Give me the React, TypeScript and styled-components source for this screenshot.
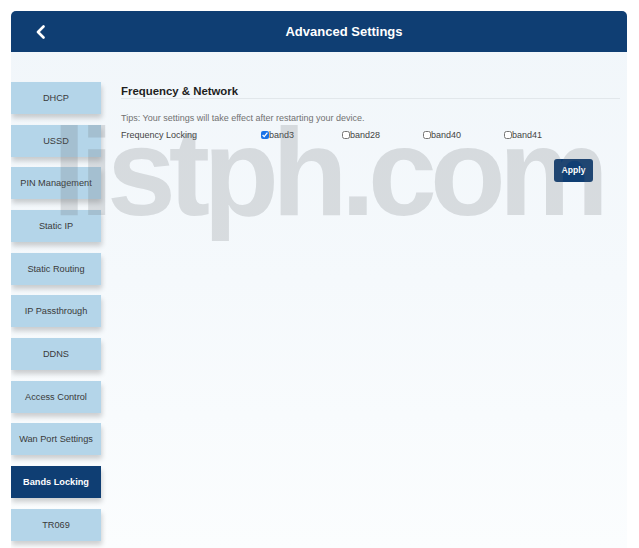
import React from "react";
import styled, { createGlobalStyle } from "styled-components";

const GlobalStyle = createGlobalStyle`
  html, body { margin: 0; padding: 0; background: #ffffff; }
  body { font-family: "Liberation Sans", Arial, Helvetica, sans-serif; }
  * { box-sizing: border-box; }
`;

const Page = styled.div`
  position: relative;
  width: 639px;
  height: 548px;
  overflow: hidden;
  padding: 11px 12px 0 11px;
  background: #ffffff;
`;

const Panel = styled.div`
  height: 100%;
  border-radius: 5px 5px 0 0;
  overflow: hidden;
  display: flex;
  flex-direction: column;
  background: linear-gradient(180deg, #f1f6fa 0%, #f5f9fc 50%, #fbfdfe 100%);
`;

const Header = styled.header`
  height: 41px;
  flex-shrink: 0;
  display: flex;
  align-items: center;
  background: #0f3e73;
  color: #ffffff;
`;

const BackButton = styled.button`
  width: 50px;
  height: 100%;
  border: 0;
  background: transparent;
  padding: 0 0 0 24px;
  display: flex;
  align-items: center;
  cursor: pointer;
`;

const Title = styled.h1`
  flex: 1;
  margin: 0;
  text-align: center;
  font-size: 13px;
  font-weight: 700;
  color: #ffffff;
`;

const Body = styled.div`
  flex: 1;
  display: flex;
  padding-top: 30px;
`;

const Sidebar = styled.nav`
  width: 90px;
  flex-shrink: 0;
  display: flex;
  flex-direction: column;
  gap: 10.67px;
`;

const NavItem = styled.div<{ $active?: boolean }>`
  height: 32px;
  display: flex;
  align-items: center;
  justify-content: center;
  font-size: 9.2px;
  white-space: nowrap;
  background: ${(p) => (p.$active ? "#0f3e73" : "#b4d5e9")};
  color: ${(p) => (p.$active ? "#ffffff" : "#3a3a3a")};
  font-weight: ${(p) => (p.$active ? 700 : 400)};
  box-shadow: 1px 4px 5px rgba(0, 0, 0, 0.18);
`;

const Content = styled.main`
  flex: 1;
  padding: 2px 7px 0 20px;
  display: flex;
  flex-direction: column;
`;

const SectionTitle = styled.h2`
  margin: 0;
  font-size: 11.4px;
  line-height: 14px;
  font-weight: 700;
  color: #1e1e1e;
  border-bottom: 1px solid #e2e7eb;
`;

const Tips = styled.p`
  margin: 13px 0 0 0;
  font-size: 9px;
  line-height: 12px;
  color: #717171;
`;

const FieldRow = styled.div`
  margin-top: 4.5px;
  display: flex;
  align-items: center;
  font-size: 9px;
  line-height: 12px;
  color: #444444;
`;

const FieldLabel = styled.span`
  width: 140px;
  flex-shrink: 0;
`;

const BandOption = styled.label`
  width: 81px;
  flex-shrink: 0;
  display: flex;
  align-items: center;
  color: #444444;
`;

const Check = styled.input`
  width: 8px;
  height: 8px;
  margin: 0;
  accent-color: #1a73e8;
`;

const Actions = styled.div`
  display: flex;
  justify-content: flex-end;
  padding-right: 27px;
  margin-top: 18px;
`;

const ApplyButton = styled.button`
  width: 39px;
  height: 23px;
  border: 0;
  border-radius: 3px;
  background: #0f3e73;
  color: #ffffff;
  font-family: "Liberation Sans", Arial, sans-serif;
  font-size: 8.6px;
  font-weight: 700;
  padding: 0;
  cursor: pointer;
`;

const Watermark = styled.div`
  position: absolute;
  left: 52px;
  top: 110px;
  font-family: "Liberation Sans", Arial, sans-serif;
  font-size: 124px;
  line-height: 1;
  font-weight: 700;
  letter-spacing: -7px;
  color: rgba(100, 104, 108, 0.2);
  pointer-events: none;
  white-space: nowrap;
`;

const items = [
  "DHCP",
  "USSD",
  "PIN Management",
  "Static IP",
  "Static Routing",
  "IP Passthrough",
  "DDNS",
  "Access Control",
  "Wan Port Settings",
  "Bands Locking",
  "TR069",
];

const bands = [
  { name: "band3", checked: true },
  { name: "band28", checked: false },
  { name: "band40", checked: false },
  { name: "band41", checked: false },
];

export default function App() {
  return (
    <>
      <GlobalStyle />
      <Page>
        <Panel>
          <Header>
            <BackButton aria-label="Back">
              <svg width="11" height="14" viewBox="0 0 11 14" fill="none">
                <path
                  d="M8.5 1.5 L3 7 L8.5 12.5"
                  stroke="#ffffff"
                  strokeWidth="2.6"
                  strokeLinecap="round"
                  strokeLinejoin="round"
                />
              </svg>
            </BackButton>
            <Title>Advanced Settings</Title>
          </Header>
          <Body>
            <Sidebar>
              {items.map((it) => (
                <NavItem key={it} $active={it === "Bands Locking"}>
                  {it}
                </NavItem>
              ))}
            </Sidebar>
            <Content>
              <SectionTitle>Frequency &amp; Network</SectionTitle>
              <Tips>Tips: Your settings will take effect after restarting your device.</Tips>
              <FieldRow>
                <FieldLabel>Frequency Locking</FieldLabel>
                {bands.map((b) => (
                  <BandOption key={b.name}>
                    <Check type="checkbox" defaultChecked={b.checked} />
                    {b.name}
                  </BandOption>
                ))}
              </FieldRow>
              <Actions>
                <ApplyButton>Apply</ApplyButton>
              </Actions>
            </Content>
          </Body>
        </Panel>
        <Watermark>listph.com</Watermark>
      </Page>
    </>
  );
}
